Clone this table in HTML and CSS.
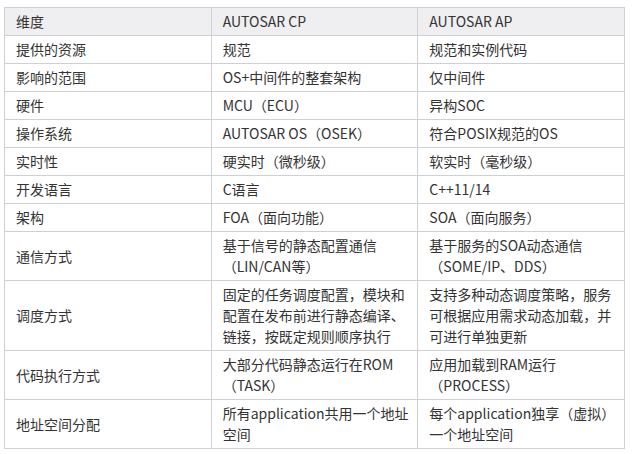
FILE: index.html
```html
<!DOCTYPE html>
<html lang="zh">
<head>
<meta charset="utf-8">
<link rel="stylesheet" href="styles.css">
</head>
<body>
<table class="cmp">
  <colgroup><col class="c"><col class="c"><col class="c"></colgroup>
  <thead>
    <tr><th>维度</th><th>AUTOSAR CP</th><th>AUTOSAR AP</th></tr>
  </thead>
  <tbody>
    <tr><td>提供的资源</td><td>规范</td><td>规范和实例代码</td></tr>
    <tr><td>影响的范围</td><td>OS+中间件的整套架构</td><td>仅中间件</td></tr>
    <tr><td>硬件</td><td>MCU（ECU）</td><td>异构SOC</td></tr>
    <tr><td>操作系统</td><td>AUTOSAR OS（OSEK）</td><td>符合POSIX规范的OS</td></tr>
    <tr><td>实时性</td><td>硬实时（微秒级）</td><td>软实时（毫秒级）</td></tr>
    <tr><td>开发语言</td><td>C语言</td><td>C++11/14</td></tr>
    <tr><td>架构</td><td>FOA（面向功能）</td><td>SOA（面向服务）</td></tr>
    <tr><td>通信方式</td><td>基于信号的静态配置通信（LIN/CAN等）</td><td>基于服务的SOA动态通信（SOME/IP、DDS）</td></tr>
    <tr><td>调度方式</td><td>固定的任务调度配置，模块和配置在发布前进行静态编译、链接，按既定规则顺序执行</td><td>支持多种动态调度策略，服务可根据应用需求动态加载，并可进行单独更新</td></tr>
    <tr><td>代码执行方式</td><td>大部分代码静态运行在ROM（TASK）</td><td>应用加载到RAM运行（PROCESS）</td></tr>
    <tr><td>地址空间分配</td><td>所有application共用一个地址空间</td><td>每个application独享（虚拟）一个地址空间</td></tr>
  </tbody>
</table>
</body>
</html>
```
FILE: styles.css
```css
html, body {
  margin: 0;
  padding: 0;
  background: #ffffff;
}
body {
  padding: 7px 0 0 4px;
  font-family: "Noto Sans CJK SC", "Noto Sans", sans-serif;
  font-size: 14px;
  color: #333333;
}
.cmp {
  border-collapse: collapse;
  table-layout: fixed;
  width: 621px;
}
.cmp .c {
  width: 33.333%;
}
.cmp th,
.cmp td {
  border: 1px solid #cfcfd6;
  padding: 3px 4px 3px 11px;
  line-height: 21px;
  text-align: left;
  vertical-align: middle;
  font-weight: normal;
}
.cmp th {
  background: #efeff1;
}
.cmp td:not(:first-child) {
  vertical-align: top;
}
```
